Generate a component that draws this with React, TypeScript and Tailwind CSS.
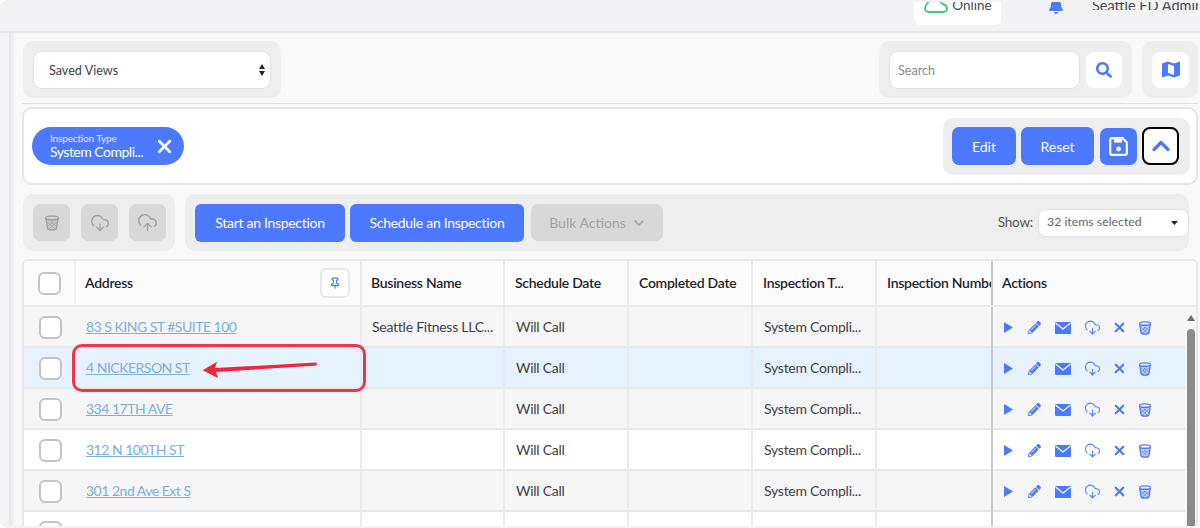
import React from "react";
import { FaBell, FaPencilAlt, FaSearch } from "react-icons/fa";
import { ChevronDown, ChevronUp, CloudDownload, CloudUpload, X, Pin } from "lucide-react";

const B = "#4d79ff";

function Trash({ size = 16, color = B }: { size?: number; color?: string }) {
  return (
    <svg width={size} height={size} viewBox="0 0 16 16" fill="none">
      <ellipse cx="8" cy="3" rx="6.2" ry="1.9" fill="none" stroke={color} strokeWidth="1.5" />
      <path d="M2 3.5 L3.4 13 Q3.6 15 8 15 Q12.4 15 12.6 13 L14 3.5" fill={color} fillOpacity="0.25" stroke={color} strokeWidth="1.5" />
      <path d="M3.5 7 L11 14 M6.5 6.5 L12.5 11.5 M12.5 7 L5 14 M9.5 6.5 L3.5 11.5" stroke={color} strokeWidth="0.8" />
    </svg>
  );
}

function Mail() {
  return (
    <svg width="16" height="12" viewBox="0 0 16 12">
      <rect width="16" height="12" rx="1" fill={B} />
      <path d="M0.5 1 L8 7 L15.5 1" fill="none" stroke="#fff" strokeWidth="1.2" />
    </svg>
  );
}

function Check() {
  return <div className="w-[23px] h-[23px] rounded-[6px] border-2 border-[#c4c4c4] bg-white" />;
}

const grid = "grid grid-cols-[52px_286px_143px_124px_124px_124px_114px_1fr]";

const rows = [
  { a: "83 S KING ST #SUITE 100", b: "Seattle Fitness LLC...", bg: "bg-[#f6f6f7]" },
  { a: "4 NICKERSON ST", b: "", bg: "bg-[#e6f3fe]" },
  { a: "334 17TH AVE", b: "", bg: "bg-[#f6f6f7]" },
  { a: "312 N 100TH ST", b: "", bg: "bg-white" },
  { a: "301 2nd Ave Ext S", b: "", bg: "bg-[#f6f6f7]" },
];

function Row({ a, b, bg, date = "Will Call", type = "System Compli...", actions = true }: { a: string; b: string; bg: string; date?: string; type?: string; actions?: boolean }) {
  const cell = "flex items-center border-r-2 border-[#ebebed] pl-[10px] pb-[2px] text-[14px] tracking-[-0.25px] text-[#3f3f46]";
  return (
    <div className={`${grid} h-[41px] border-b-2 border-[#e6e8ee] ${bg}`}>
      <div className="flex items-center justify-center"><Check /></div>
      <div className="flex items-center border-r-2 border-[#ebebed] pl-[10px] pb-[2px] text-[14px] tracking-[-0.5px]">
        <a className="text-[#78b0e0] underline">{a}</a>
      </div>
      <div className={cell}>{b}</div>
      <div className={`${cell} pl-[11px]`}>{date}</div>
      <div className={cell} />
      <div className={`${cell} pl-[11px]`}>{type}</div>
      <div className="flex items-center" />
      <div className="flex items-center border-l-2 border-[#c9c9cc] pl-[11px] h-[41px]">
        {actions && (
          <>
            <svg width="9" height="11" viewBox="0 0 9 11"><path d="M0 0 L9 5.5 L0 11 Z" fill={B} /></svg>
            <FaPencilAlt size={13} color={B} className="ml-[15px]" />
            <div className="ml-[14px] flex"><Mail /></div>
            <CloudDownload size={17} color={B} strokeWidth={1.5} className="ml-[13px]" />
            <X size={15} color={B} strokeWidth={3.5} className="ml-[11px]" />
            <div className="ml-[11px] flex"><Trash size={14} /></div>
          </>
        )}
      </div>
    </div>
  );
}

export default function App() {
  return (
    <div className="w-[1200px] h-[528px] bg-white">
      <div className="relative w-full h-full overflow-hidden rounded-[8px] bg-[#f2f2f5] flex flex-col text-[#3f3f46]" style={{ fontFamily: "Lato, sans-serif" }}>
        <div className="h-[33px] shrink-0 pt-[2px] border-b-2 border-[#e8e8ea] bg-[#f3f3f5]">
          <header className="h-full overflow-hidden flex justify-end items-start">
            <div className="w-[87px] h-[23px] bg-white rounded-b-[6px] flex items-start justify-center gap-[4px] pl-[1px]">
              <div className="h-[11px] overflow-hidden">
                <svg width="24" height="11" viewBox="0 0 24 11" fill="none">
                  <path d="M8 -3 Q1 2 1 6.5 Q1 10 5 10 H19 Q23 10 23 6.5 Q23 3 18.5 2 Q16 -1 13 -3" stroke="#3cc77a" strokeWidth="1.8" />
                </svg>
              </div>
              <span className="text-[13.5px] leading-[6px] text-[#4a4a52]">Online</span>
            </div>
            <div className="ml-[47px] h-[12px] overflow-hidden"><FaBell size={16} color={B} className="-mt-[4px]" /></div>
            <span className="ml-[28px] w-[106px] whitespace-nowrap overflow-hidden text-[14.5px] leading-[8px] text-[#4a4a52]">Seattle FD Admin</span>
            <div className="w-[2px]" />
          </header>
        </div>

        <div className="flex flex-1 min-h-0 pb-[2px]">
          <div className="w-[9px] shrink-0 bg-[#f4f4f6]" />
          <main className="flex-1 min-w-0 bg-[#f9f9f9] pl-[13px] pr-[2px] pt-[8px] shadow-[inset_5px_0_4px_-2px_#e4e4e6] flex flex-col">
            <div className="flex items-start">
              <div className="ml-[1px] w-[258px] h-[57px] bg-[#eeeeee] rounded-[10px] flex items-center px-[10px]">
                <div className="w-full h-[38px] rounded-[9px] bg-white border border-[#e2e2e2] flex items-center justify-between pl-[15px] pr-[4px] text-[12.6px]">
                  <span className="pt-[3px]">Saved Views</span>
                  <svg width="8" height="12" viewBox="0 0 8 12"><path d="M4 0 L7 5 L1 5 Z M4 12 L7 7 L1 7 Z" fill="#222" /></svg>
                </div>
              </div>
              <div className="ml-auto w-[253px] h-[57px] bg-[#eeeeee] rounded-[10px] flex items-center px-[10px] gap-[6px]">
                <div className="w-[191px] h-[38px] rounded-[9px] bg-white border border-[#e2e2e2] flex items-center pl-[8px] pt-[3px] text-[12.6px] text-[#8a8a8a]">Search</div>
                <div className="w-[36px] h-[36px] rounded-[8px] bg-white flex items-center justify-center">
                  <FaSearch size={16} color={B} />
                </div>
              </div>
              <div className="ml-[10px] w-[56px] h-[57px] bg-[#eeeeee] rounded-[10px] flex items-center pl-[10px]">
                <div className="w-[37px] h-[36px] rounded-[8px] bg-white flex items-center justify-center">
                  <svg width="18" height="17" viewBox="0 0 18 17" fill="none">
                    <path d="M0 2.5 L6 0.5 L12 2.5 L18 0.5 V14.5 L12 16.5 L6 14.5 L0 16.5 Z" fill={B} />
                    <path d="M6 3 L12 5 V14 L6 12 Z" fill="#fff" />
                  </svg>
                </div>
              </div>
            </div>

            <div className="mt-[5px] border-t border-[#e2e2e2] pt-[3px]">
              <div className="h-[78px] rounded-[10px] bg-white border-2 border-[#e6e6e6] flex items-center justify-between pl-[8px] pr-[6px]">
                <div className="w-[152px] h-[38px] rounded-full bg-[#4d79ff] text-white flex items-center pl-[18px]">
                  <div className="w-[101px]">
                    <div className="text-[10px] tracking-[-0.15px] leading-[11px] text-[#e4eaff]">Inspection Type</div>
                    <div className="text-[14px] tracking-[-0.5px] leading-[16px] whitespace-nowrap">System Compli...</div>
                  </div>
                  <X size={21} strokeWidth={3.2} className="ml-[3px]" />
                </div>
                <div className="w-[247px] h-[57px] bg-[#eeeeee] rounded-[10px] flex items-center pl-[9px] gap-[5px]">
                  <div className="w-[64px] h-[38px] rounded-[7px] bg-[#4d79ff] text-white text-[14px] flex items-center justify-center">Edit</div>
                  <div className="w-[73px] h-[38px] rounded-[7px] bg-[#4d79ff] text-white text-[14px] flex items-center justify-center">Reset</div>
                  <div className="w-[37px] h-[37px] rounded-[7px] bg-[#4d79ff] flex items-center justify-center ml-[1px]">
                    <svg width="19" height="19" viewBox="0 0 19 19" fill="none">
                      <path d="M3 1.2 H13.5 L17.8 5.5 V16 Q17.8 17.8 16 17.8 H3 Q1.2 17.8 1.2 16 V3 Q1.2 1.2 3 1.2 Z" stroke="#fff" strokeWidth="2.2" />
                      <rect x="5" y="2" width="8" height="3.6" fill="#fff" />
                      <circle cx="9.5" cy="12" r="2.4" fill="#fff" />
                    </svg>
                  </div>
                  <div className="w-[37px] h-[38px] rounded-[8px] bg-white border-2 border-black flex items-center justify-center">
                    <ChevronUp size={28} color={B} strokeWidth={2.8} />
                  </div>
                </div>
              </div>
            </div>

            <div className="mt-[9px] flex gap-[10px] h-[57px] shrink-0">
              <div className="ml-[1px] w-[152px] bg-[#eeeeee] rounded-[10px] flex items-center pl-[10px] gap-[11px]">
                {[0, 1, 2].map((i) => (
                  <div key={i} className="w-[37px] h-[37px] rounded-[7px] bg-[#d8d8d8] flex items-center justify-center">
                    {i === 0 && <Trash size={16} color="#a0a0a0" />}
                    {i === 1 && <CloudDownload size={20} color="#a0a0a0" strokeWidth={1.6} />}
                    {i === 2 && <CloudUpload size={21} color="#a0a0a0" strokeWidth={1.6} />}
                  </div>
                ))}
              </div>
              <div className="w-[1004px] bg-[#eeeeee] rounded-[10px] flex items-center pl-[10px] text-[14px]">
                <div className="w-[150px] h-[38px] rounded-[6px] bg-[#4d79ff] text-white tracking-[-0.3px] flex items-center justify-center">Start an Inspection</div>
                <div className="ml-[5px] w-[174px] h-[38px] rounded-[6px] bg-[#4d79ff] text-white tracking-[-0.3px] flex items-center justify-center">Schedule an Inspection</div>
                <div className="ml-[7px] w-[132px] h-[37px] rounded-[7px] bg-[#d8d8d8] text-[#a3a3a3] flex items-center justify-center gap-[5px] pl-[2px]">
                  Bulk Actions <ChevronDown size={16} strokeWidth={2.5} />
                </div>
                <span className="ml-auto text-[#55555c] text-[13.5px] tracking-[-0.2px]">Show:</span>
                <div className="ml-[5px] w-[151px] h-[28px] rounded-[8px] bg-white border border-[#e2e2e2] flex items-center justify-between pl-[8px] pr-[10px] text-[12.3px] text-[#66666c]">
                  <span>32 items selected</span>
                  <svg width="7" height="4" viewBox="0 0 7 4"><path d="M0 0 H7 L3.5 4 Z" fill="#222" /></svg>
                </div>
              </div>
            </div>

            <div className="relative mt-[8px] w-[1176px] flex-1 min-h-0 overflow-hidden rounded-t-[6px] border-t-2 border-l-2 border-r-2 border-[#e9e9ec] bg-white">
              <div className={`${grid} h-[46px] bg-[#fbfbfb] border-b-2 border-[#ebebed] text-[14px] font-semibold tracking-[-0.28px] text-[#1f1f2b]`}>
                <div className="flex items-center justify-center border-r-2 border-[#f1f1f3]"><Check /></div>
                <div className="flex items-center justify-between border-r-2 border-[#ebebed] pl-[9px] pr-[10px]">
                  <span className="pb-[2px]">Address</span>
                  <div className="w-[30px] h-[30px] rounded-[6px] bg-white border-2 border-[#e8e8e8] flex items-center justify-center">
                    <Pin size={12} color={B} strokeWidth={2.5} />
                  </div>
                </div>
                <div className="flex items-center border-r-2 border-[#ebebed] pl-[9px] pb-[2px]">Business Name</div>
                <div className="flex items-center border-r-2 border-[#ebebed] pl-[10px] pb-[2px]">Schedule Date</div>
                <div className="flex items-center border-r-2 border-[#ebebed] pl-[10px] pb-[2px]">Completed Date</div>
                <div className="flex items-center border-r-2 border-[#ebebed] pl-[10px] pb-[2px]">Inspection T...</div>
                <div className="flex items-center pl-[10px] pb-[2px] whitespace-nowrap overflow-hidden">Inspection Number</div>
                <div className="flex items-center border-l-2 border-[#c9c9cc] pl-[9px] pb-[2px] bg-[#fbfbfb]">Actions</div>
              </div>
              {rows.map((r) => <Row key={r.a} {...r} />)}
              <Row a="" b="" bg="bg-white" date="" type="" actions={false} />

              <div className="absolute right-0 top-[46px] bottom-0 w-[11px] bg-[#f8f8f9]">
                <svg className="ml-[2px] mt-[8px]" width="8" height="6" viewBox="0 0 8 6"><path d="M4 0 L8 6 H0 Z" fill="#6f6f6f" /></svg>
                <div className="ml-[2px] mt-[8px] w-[8px] h-[300px] rounded-full bg-[#8b8b8b]" />
              </div>
            </div>
          </main>
        </div>

        <div className="absolute left-[72px] top-[344px] w-[294px] h-[48px] rounded-[10px] border-[3px] border-[#f0354a]" />
        <svg className="absolute left-[195px] top-[355px]" width="130" height="26" viewBox="0 0 130 26">
          <path d="M121.7 7.5 L20 13 L22 6.7 L7.7 15.3 L23 23 L21 17 L121.7 10.5 Z" fill="#f0253c" />
        </svg>
      </div>
    </div>
  );
}
